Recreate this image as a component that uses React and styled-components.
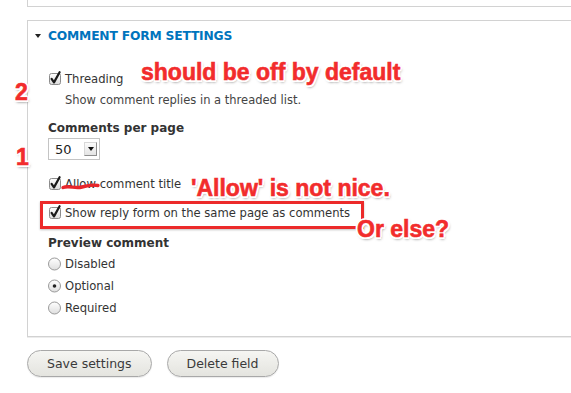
import React from 'react';
import styled, { createGlobalStyle } from 'styled-components';

const Global = createGlobalStyle`
  html, body { margin: 0; padding: 0; background: #fff; }
  body { font-family: "DejaVu Sans", "Liberation Sans", sans-serif; color: #333; }
`;

const Page = styled.div`
  position: relative;
  width: 571px;
  height: 393px;
  overflow: hidden;
  padding-left: 27px;
  box-sizing: border-box;
`;

const PrevPanel = styled.div`
  height: 7px;
  box-sizing: border-box;
  border-left: 1px solid #d2d2d2;
  border-bottom: 1px solid #d2d2d2;
  margin-right: -40px;
`;

const Panel = styled.section`
  margin-top: 13px;
  margin-right: -40px;
  border: 1px solid #d2d2d2;
  box-shadow: 0 1px 0 #ececec;
  padding: 7px 0 19px 20px;
`;

const Legend = styled.div`
  display: flex;
  align-items: center;
  height: 16px;
  margin-left: -13px;
`;

const Caret = styled.span`
  width: 0;
  height: 0;
  border-left: 3px solid transparent;
  border-right: 3px solid transparent;
  border-top: 4px solid #222;
  margin-right: 7px;
`;

const LegendText = styled.span`
  font-size: 12.3px;
  font-weight: bold;
  color: #0074bd;
  text-transform: uppercase;
  letter-spacing: -0.2px;
`;

const Row = styled.label`
  display: flex;
  align-items: center;
  height: 18px;
  margin-top: ${(p) => p.$mt || 0}px;
  font-size: 11.6px;
  color: #333;
  gap: 3px;
`;

const Description = styled.div`
  padding-left: 17px;
  margin-top: 4px;
  font-size: 11.5px;
  line-height: 16px;
  color: #444;
`;

const FieldLabel = styled.div`
  font-size: 12px;
  font-weight: bold;
  line-height: 16px;
  margin-top: ${(p) => p.$mt || 0}px;
  color: #333;
`;

const Select = styled.div`
  display: flex;
  align-items: center;
  width: 52px;
  height: 22px;
  box-sizing: border-box;
  margin-top: 2px;
  border: 1px solid #c4c4c4;
  background: #fff;
  padding: 0 2px 0 6px;
  font-size: 13px;
  color: #222;
`;

const SelectArrow = styled.span`
  margin-left: auto;
  width: 13px;
  height: 14px;
  box-sizing: border-box;
  border: 1px solid #d8d8d8;
  border-right-color: #8e8e8e;
  border-bottom-color: #8e8e8e;
  background: linear-gradient(#fbfbfb, #e4e4e4);
  display: flex;
  align-items: center;
  justify-content: center;
  &::after {
    content: '';
    border-left: 3px solid transparent;
    border-right: 3px solid transparent;
    border-top: 4px solid #111;
  }
`;

const Strike = styled.span`
  position: relative;
`;

const Squiggle = styled.svg`
  position: absolute;
  left: -3px;
  top: 3px;
  width: 38px;
  height: 10px;
  overflow: visible;
`;

const Buttons = styled.div`
  display: flex;
  gap: 15px;
  margin-top: 13px;
`;

const Button = styled.button`
  height: 27px;
  padding: 0 ${(p) => p.$pad}px;
  border: 1px solid #a8a8a8;
  border-radius: 14px;
  background: linear-gradient(#f5f5f2, #e4e4df);
  font-family: "DejaVu Sans", sans-serif;
  font-size: 12.5px;
  color: #3a3a3a;
  box-shadow: 0 1px 1px rgba(0, 0, 0, 0.08);
`;

const Overlay = styled.div`
  position: absolute;
  inset: 0;
  pointer-events: none;
`;

const Note = styled.div`
  position: absolute;
  left: ${(p) => p.$x}px;
  top: ${(p) => p.$y}px;
  white-space: nowrap;
  font-family: "Liberation Sans", Arial, sans-serif;
  font-weight: bold;
  font-size: 23px;
  line-height: 23px;
  color: #f22c2c;
  -webkit-text-stroke: 0.6px #f22c2c;
  text-shadow:
    -1.5px -1.5px 0 #fff, 1.5px -1.5px 0 #fff, -1.5px 1.5px 0 #fff, 1.5px 1.5px 0 #fff,
    0 -2.2px 0 #fff, 0 2.2px 0 #fff, -2.2px 0 0 #fff, 2.2px 0 0 #fff,
    1px 2px 3px rgba(0, 0, 0, 0.6);
`;

const Frame = styled.div`
  position: absolute;
  left: 40px;
  top: 201px;
  width: 324px;
  height: 28px;
  box-sizing: border-box;
  border: 3px solid #ec2a2a;
  box-shadow: 0 1px 2px rgba(0, 0, 0, 0.25);
`;

const Checkbox = () => (
  <svg width="14" height="16" viewBox="0 0 14 16" style={{ flex: 'none', marginTop: '-2px' }}>
    <defs>
      <linearGradient id="cbg" x1="0" y1="0" x2="0" y2="1">
        <stop offset="0" stopColor="#ffffff" />
        <stop offset="1" stopColor="#dcdcdc" />
      </linearGradient>
    </defs>
    <rect x="1.5" y="3.5" width="11" height="11" rx="2" fill="url(#cbg)" stroke="#8c8c8c" />
    <path d="M3.6 8.8 L6 12.4 L11.6 2.2" fill="none" stroke="#1a1a1a" strokeWidth="2.2" strokeLinecap="round" strokeLinejoin="round" />
  </svg>
);

const Radio = ({ checked }) => (
  <svg width="14" height="14" viewBox="0 0 14 14" style={{ flex: 'none' }}>
    <defs>
      <linearGradient id="rbg" x1="0" y1="0" x2="0" y2="1">
        <stop offset="0" stopColor="#ffffff" />
        <stop offset="1" stopColor="#dedede" />
      </linearGradient>
    </defs>
    <circle cx="6.5" cy="7" r="6" fill="url(#rbg)" stroke="#9a9a9a" />
    {checked && <circle cx="6.5" cy="7" r="1.8" fill="#222" />}
  </svg>
);

export default function App() {
  return (
    <>
      <Global />
      <Page>
        <PrevPanel />
        <Panel>
          <Legend>
            <Caret />
            <LegendText>Comment form settings</LegendText>
          </Legend>
          <Row $mt={26}>
            <Checkbox />
            Threading
          </Row>
          <Description>Show comment replies in a threaded list.</Description>
          <FieldLabel $mt={12}>Comments per page</FieldLabel>
          <Select>
            50
            <SelectArrow />
          </Select>
          <Row $mt={15}>
            <Checkbox />
            <span>
              <Strike>
                Allow
                <Squiggle viewBox="0 0 38 10">
                  <path d="M1 7.5 C 7 5, 13 9, 20 7 S 31 4.5, 36 5.5" fill="none" stroke="#e8262b" strokeWidth="3.4" strokeLinecap="round" />
                </Squiggle>
              </Strike>{' '}
              comment title
            </span>
          </Row>
          <Row $mt={11}>
            <Checkbox />
            Show reply form on the same page as comments
          </Row>
          <FieldLabel $mt={13}>Preview comment</FieldLabel>
          <Row $mt={4}>
            <Radio />
            Disabled
          </Row>
          <Row $mt={4}>
            <Radio checked />
            Optional
          </Row>
          <Row $mt={4}>
            <Radio />
            Required
          </Row>
        </Panel>
        <Buttons>
          <Button $pad={19}>Save settings</Button>
          <Button $pad={19}>Delete field</Button>
        </Buttons>
        <Overlay>
          <Frame />
          <Note $x={141} $y={61}>should be off by default</Note>
          <Note $x={15} $y={81}>2</Note>
          <Note $x={16} $y={146}>1</Note>
          <Note $x={191} $y={177}>'Allow' is not nice.</Note>
          <Note $x={357} $y={218}>Or else?</Note>
        </Overlay>
      </Page>
    </>
  );
}
